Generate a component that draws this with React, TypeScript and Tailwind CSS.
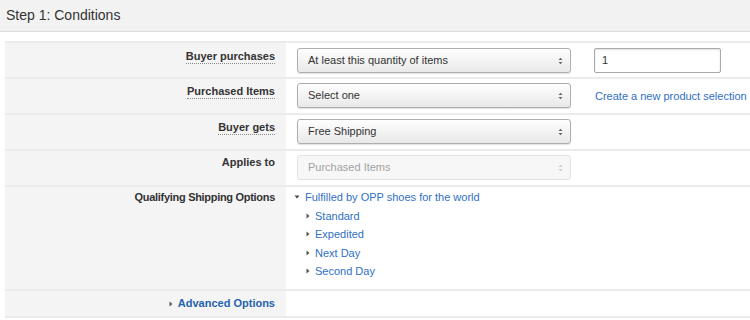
import React from "react";

const Arrows = ({ color = "#666" }: { color?: string }) => (
  <svg width="5" height="8" viewBox="0 0 5 8" className="shrink-0">
    <path d="M0.5 3 L2.5 0.8 L4.5 3 Z" fill={color} />
    <path d="M0.5 5 L2.5 7.2 L4.5 5 Z" fill={color} />
  </svg>
);

const Select = ({ text, disabled = false }: { text: string; disabled?: boolean }) => (
  <div
    className={
      disabled
        ? "w-[274px] h-[25px] flex items-center justify-between pl-[10px] pr-[7px] rounded-[3px] border border-[#e2e2e2] bg-[#f7f7f7] text-[#a3a3a3]"
        : "w-[274px] h-[25px] flex items-center justify-between pl-[10px] pr-[7px] rounded-[3px] border border-[#aeaeae] bg-gradient-to-b from-[#fefefe] to-[#e9e9e9] text-[#333] shadow-[0_1px_1px_rgba(0,0,0,0.12)]"
    }
  >
    <span>{text}</span>
    <Arrows color={disabled ? "#cfcfcf" : "#666"} />
  </div>
);

const Label = ({ text, dotted = true, tight = false }: { text: string; dotted?: boolean; tight?: boolean }) => (
  <span
    className={
      (dotted
        ? "font-bold text-[#333] border-b border-dotted border-[#8a8a8a] leading-[13px] inline-block"
        : "font-bold text-[#333] leading-[13px] inline-block") + (tight ? " tracking-[-0.3px]" : "")
    }
  >
    {text}
  </span>
);

const Right = () => (
  <svg width="4" height="6" viewBox="0 0 4 6" className="shrink-0">
    <path d="M0.5 0.5 L3.5 3 L0.5 5.5 Z" fill="#555" />
  </svg>
);

const Down = () => (
  <svg width="6" height="4" viewBox="0 0 6 4" className="shrink-0">
    <path d="M0.5 0.5 L5.5 0.5 L3 3.5 Z" fill="#444" />
  </svg>
);

export default function App() {
  return (
    <div
      className="w-[750px] h-[320px] bg-white overflow-hidden text-[11px]"
      style={{ fontFamily: '"Liberation Sans", Arial, sans-serif' }}
    >
      <div className="h-[32px] bg-[#f2f2f2] border-b border-[#dcdcdc] flex items-center pl-[6px] pb-[1px]">
        <span className="text-[14px] text-[#333]">Step 1: Conditions</span>
      </div>

      <div className="mt-[9px] ml-[5px] border-t-2 border-[#ebebeb]">
        {/* Row 1 */}
        <div className="flex border-b-2 border-[#ebebeb] h-[36px]">
          <div className="w-[281px] bg-[#f4f4f4] text-right pr-[11px] pt-[5px]">
            <Label text="Buyer purchases" />
          </div>
          <div className="flex-1 flex items-start pl-[11px] pt-[5px] gap-[23px]">
            <Select text="At least this quantity of items" />
            <div className="w-[127px] h-[25px] border border-[#a9a9a9] rounded-[2px] shadow-[inset_0_1px_2px_rgba(0,0,0,0.12)] flex items-center pl-[7px] text-[#333]">
              1
            </div>
          </div>
        </div>
        {/* Row 2 */}
        <div className="flex border-b-2 border-[#ebebeb] h-[36px]">
          <div className="w-[281px] bg-[#f4f4f4] text-right pr-[11px] pt-[4px]">
            <Label text="Purchased Items" />
          </div>
          <div className="flex-1 flex items-start pl-[11px] pt-[4px] gap-[24px]">
            <Select text="Select one" />
            <span className="text-[#2f6fc4] mt-[5px] whitespace-nowrap">Create a new product selection</span>
          </div>
        </div>
        {/* Row 3 */}
        <div className="flex border-b-2 border-[#ebebeb] h-[36px]">
          <div className="w-[281px] bg-[#f4f4f4] text-right pr-[11px] pt-[4px]">
            <Label text="Buyer gets" />
          </div>
          <div className="flex-1 flex items-start pl-[11px] pt-[4px]">
            <Select text="Free Shipping" />
          </div>
        </div>
        {/* Row 4 */}
        <div className="flex border-b-2 border-[#ebebeb] h-[36px]">
          <div className="w-[281px] bg-[#f4f4f4] text-right pr-[11px] pt-[3px]">
            <Label text="Applies to" dotted={false} />
          </div>
          <div className="flex-1 flex items-start pl-[11px] pt-[4px]">
            <Select text="Purchased Items" disabled />
          </div>
        </div>
        {/* Row 5 */}
        <div className="flex border-b-2 border-[#ebebeb] h-[104px]">
          <div className="w-[281px] bg-[#f4f4f4] text-right pr-[11px] pt-[2px]">
            <Label text="Qualifying Shipping Options" dotted={false} tight />
          </div>
          <div className="flex-1 pl-[8px] pt-[1px] text-[#2f6fc4]">
            <div className="flex items-center h-[18.5px] gap-[5px]">
              <Down />
              <span>Fulfilled by OPP shoes for the world</span>
            </div>
            {["Standard", "Expedited", "Next Day", "Second Day"].map((t) => (
              <div key={t} className="flex items-center h-[18.5px] gap-[5px] pl-[12px]">
                <Right />
                <span>{t}</span>
              </div>
            ))}
          </div>
        </div>
        {/* Row 6 */}
        <div className="flex border-b-2 border-[#ebebeb] h-[27px]">
          <div className="w-[281px] bg-[#f4f4f4] flex items-center justify-end pr-[11px] gap-[5px]">
            <Right />
            <span className="font-bold text-[#2563b0]">Advanced Options</span>
          </div>
          <div className="flex-1" />
        </div>
      </div>
    </div>
  );
}
